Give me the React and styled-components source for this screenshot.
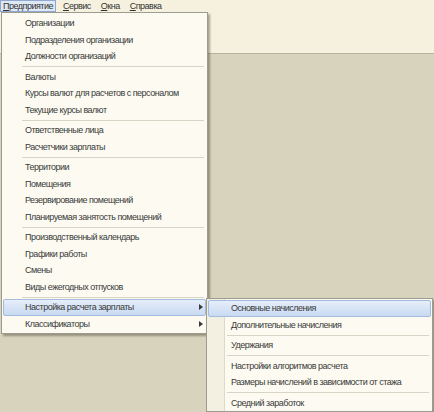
import React from "react";
import styled, { createGlobalStyle, css } from "styled-components";

const GlobalStyle = createGlobalStyle`
  html, body { margin: 0; padding: 0; }
  body {
    background: #d7d3bc;
    font-family: "Liberation Sans", Arial, sans-serif;
  }
`;

const Screen = styled.div`
  position: relative;
  width: 434px;
  height: 412px;
  overflow: hidden;
  display: flex;
  flex-direction: column;
  background: #d7d3bc;
`;

const TopPanel = styled.div`
  height: 53px;
  flex: none;
  background: #f6f1df;
  border-bottom: 1px solid #b7b39c;
  box-shadow: 0 1px 0 #e9e5d2;
`;

const MenuBar = styled.div`
  display: flex;
  height: 13px;
`;

const BarItem = styled.div`
  box-sizing: border-box;
  height: 12px;
  padding: 0 2px 0 2px;
  margin-right: 4px;
  font-size: 9px;
  line-height: 11px;
  letter-spacing: -0.5px;
  color: #333;
  border: 1px solid transparent;
  white-space: nowrap;
  ${(p) =>
    p.$active &&
    css`
      background: #dfe8f5;
      border-color: #8ea8cf;
    `}
`;

const Accel = styled.span`
  text-decoration: underline;
  text-underline-offset: 1px;
`;

const Workspace = styled.div`
  flex: 1;
  background: #d7d3bc;
`;

const Menu = styled.div`
  position: absolute;
  box-sizing: border-box;
  left: ${(p) => p.$x}px;
  top: ${(p) => p.$y}px;
  width: ${(p) => p.$w}px;
  padding: ${(p) => p.$pad};
  border: 1px solid #9d9b8f;
  background: ${(p) =>
    p.$gutter
      ? "linear-gradient(to right, #f4f0e1 0 17px, #dedac8 17px 18px, #fcfaf1 18px)"
      : "#fcfaf1"};
  box-shadow: 2px 2px 2px rgba(70, 65, 50, 0.45);
  display: flex;
  flex-direction: column;
`;

const Item = styled.div`
  box-sizing: border-box;
  height: 16.5px;
  margin: 0 1px;
  padding-left: ${(p) => p.$indent}px;
  padding-right: 2px;
  display: flex;
  align-items: center;
  justify-content: space-between;
  font-size: 9px;
  letter-spacing: -0.5px;
  color: #3a3a3a;
  white-space: nowrap;
  border: 1px solid transparent;
  border-radius: 2px;
  ${(p) =>
    p.$active &&
    css`
      background: linear-gradient(#e6eef9, #c8daf2);
      border-color: #a3bbdd;
    `}
`;

const Arrow = styled.span`
  width: 0;
  height: 0;
  border-top: 3.5px solid transparent;
  border-bottom: 3.5px solid transparent;
  border-left: 4px solid #3a3a3a;
`;

const Separator = styled.div`
  height: 1px;
  margin: 1.5px 3px 1.5px ${(p) => p.$indent}px;
  background: #d9d5c6;
`;

const mainMenu = [
  "Организации",
  "Подразделения организации",
  "Должности организаций",
  "-",
  "Валюты",
  "Курсы валют для расчетов с персоналом",
  "Текущие курсы валют",
  "-",
  "Ответственные лица",
  "Расчетчики зарплаты",
  "-",
  "Территории",
  "Помещения",
  "Резервирование помещений",
  "Планируемая занятость помещений",
  "-",
  "Производственный календарь",
  "Графики работы",
  "Смены",
  "Виды ежегодных отпусков",
  "-",
  { label: "Настройка расчета зарплаты", sub: true, active: true },
  { label: "Классификаторы", sub: true },
];

const subMenu = [
  { label: "Основные начисления", active: true },
  "Дополнительные начисления",
  "-",
  "Удержания",
  "-",
  "Настройки алгоритмов расчета",
  "Размеры начислений в зависимости от стажа",
  "-",
  "Средний заработок",
];

function MenuList({ items, indent, sepIndent }) {
  return items.map((it, i) => {
    if (it === "-") return <Separator key={i} $indent={sepIndent} />;
    const o = typeof it === "string" ? { label: it } : it;
    return (
      <Item key={i} $indent={indent} $active={o.active}>
        <span>{o.label}</span>
        {o.sub && <Arrow />}
      </Item>
    );
  });
}

export default function App() {
  return (
    <>
      <GlobalStyle />
      <Screen>
        <TopPanel>
          <MenuBar>
            <BarItem $active>
              <Accel>П</Accel>редприятие
            </BarItem>
            <BarItem>
              <Accel>С</Accel>ервис
            </BarItem>
            <BarItem>
              <Accel>О</Accel>кна
            </BarItem>
            <BarItem>
              <Accel>С</Accel>правка
            </BarItem>
          </MenuBar>
        </TopPanel>
        <Workspace />
        <Menu $x={1} $y={12} $w={207} $pad="2px 0 1px">
          <MenuList items={mainMenu} indent={21} sepIndent={20} />
        </Menu>
        <Menu $x={206} $y={298} $w={227} $pad="1px 0 0" $gutter>
          <MenuList items={subMenu} indent={22} sepIndent={20} />
        </Menu>
      </Screen>
    </>
  );
}
